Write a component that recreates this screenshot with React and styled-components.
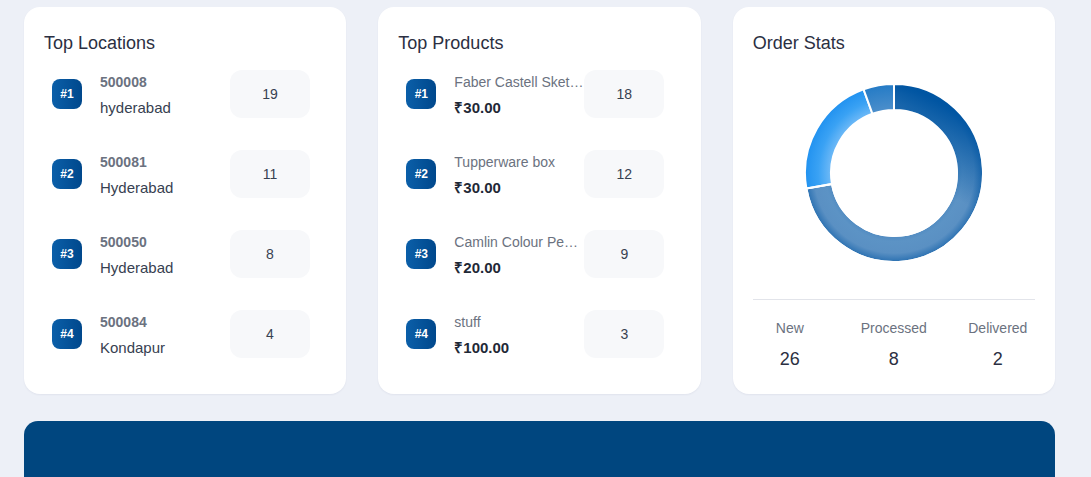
import React from 'react'
import styled, { createGlobalStyle } from 'styled-components'

const locations = [
  { code: '500008', city: 'hyderabad', count: 19 },
  { code: '500081', city: 'Hyderabad', count: 11 },
  { code: '500050', city: 'Hyderabad', count: 8 },
  { code: '500084', city: 'Kondapur', count: 4 },
]

const products = [
  { name: 'Faber Castell Sketch Pens', price: '₹30.00', count: 18 },
  { name: 'Tupperware box', price: '₹30.00', count: 12 },
  { name: 'Camlin Colour Pencils', price: '₹20.00', count: 9 },
  { name: 'stuff', price: '₹100.00', count: 3 },
]

const stats = [
  { label: 'New', value: 26, fill: 'url(#gNew)' },
  { label: 'Processed', value: 8, fill: 'url(#gProc)' },
  { label: 'Delivered', value: 2, fill: 'url(#gDel)' },
]

const C = 90
const R = 89
const r = 63

function point(rad, deg) {
  const a = ((deg - 90) * Math.PI) / 180
  return [C + rad * Math.cos(a), C + rad * Math.sin(a)]
}

function arc(from, to) {
  const large = to - from > 180 ? 1 : 0
  const [x1, y1] = point(R, from)
  const [x2, y2] = point(R, to)
  const [x3, y3] = point(r, to)
  const [x4, y4] = point(r, from)
  return `M${x1} ${y1} A${R} ${R} 0 ${large} 1 ${x2} ${y2} L${x3} ${y3} A${r} ${r} 0 ${large} 0 ${x4} ${y4} Z`
}

function Donut() {
  const total = stats.reduce((s, x) => s + x.value, 0)
  let start = 0
  const slices = stats.map((s) => {
    const end = start + (s.value / total) * 360
    const d = arc(start, end)
    start = end
    return { ...s, d }
  })
  return (
    <svg width="180" height="180" viewBox="0 0 180 180">
      <defs>
        <radialGradient id="gNew" gradientUnits="userSpaceOnUse" cx="90" cy="90" r="89">
          <stop offset="0.7" stop-color="#4f8ac1" />
          <stop offset="0.77" stop-color="#5c93c5" />
          <stop offset="0.9" stop-color="#5a90c3" />
          <stop offset="1" stop-color="#2a70b1" />
        </radialGradient>
        <linearGradient id="gNewTop" x1="0.55" y1="0" x2="0.35" y2="0.4">
          <stop offset="0" stop-color="#0055a2" stop-opacity="1" />
          <stop offset="1" stop-color="#0055a2" stop-opacity="0" />
        </linearGradient>
        <radialGradient id="gProc" gradientUnits="userSpaceOnUse" cx="90" cy="90" r="89">
          <stop offset="0.7" stop-color="#72bbf7" />
          <stop offset="0.85" stop-color="#3aa2f4" />
          <stop offset="1" stop-color="#2192f0" />
        </radialGradient>
        <radialGradient id="gDel" gradientUnits="userSpaceOnUse" cx="90" cy="90" r="89">
          <stop offset="0.7" stop-color="#4d8fcb" />
          <stop offset="1" stop-color="#247bc6" />
        </radialGradient>
      </defs>
      {slices.map((s) => (
        <path key={s.label} d={s.d} fill={s.fill} stroke="#fff" strokeWidth="2" />
      ))}
      <path d={slices[0].d} fill="url(#gNewTop)" stroke="#fff" strokeWidth="2" />
    </svg>
  )
}

export default function App() {
  return (
    <>
      <GlobalStyle />
      <Page>
        <CardGrid>
          <Card>
            <Title>Top Locations</Title>
            <List>
              {locations.map((l, i) => (
                <Row key={l.code}>
                  <Rank>#{i + 1}</Rank>
                  <Info>
                    <Code>{l.code}</Code>
                    <City>{l.city}</City>
                  </Info>
                  <Count>{l.count}</Count>
                </Row>
              ))}
            </List>
          </Card>

          <Card>
            <Title>Top Products</Title>
            <List>
              {products.map((p, i) => (
                <Row key={p.name}>
                  <Rank>#{i + 1}</Rank>
                  <Info>
                    <ProductName>{p.name}</ProductName>
                    <Price>{p.price}</Price>
                  </Info>
                  <Count>{p.count}</Count>
                </Row>
              ))}
            </List>
          </Card>

          <Card>
            <Title>Order Stats</Title>
            <ChartBox>
              <Donut />
            </ChartBox>
            <Divider />
            <StatsRow>
              {stats.map((s) => (
                <Stat key={s.label}>
                  <StatLabel>{s.label}</StatLabel>
                  <StatValue>{s.value}</StatValue>
                </Stat>
              ))}
            </StatsRow>
          </Card>
        </CardGrid>
        <Banner />
      </Page>
    </>
  )
}

const GlobalStyle = createGlobalStyle`
  body {
    margin: 0;
    background: #edf0f7;
    font-family: "Liberation Sans", Arial, sans-serif;
    overflow: hidden;
  }
`

const Page = styled.div`
  width: 1031px;
  padding: 7px 0 0 24px;
`

const CardGrid = styled.div`
  display: grid;
  grid-template-columns: repeat(3, 1fr);
  gap: 32px;
`

const Card = styled.section`
  background: #fff;
  border-radius: 16px;
  padding: 24px 20px;
  height: 387px;
  box-sizing: border-box;
  box-shadow: 0 1px 2px rgba(30, 40, 80, 0.06);
`

const Title = styled.h3`
  margin: 0;
  font-size: 18px;
  line-height: 24px;
  font-weight: 400;
  color: #2b2f42;
`

const List = styled.div`
  display: flex;
  flex-direction: column;
  gap: 32px;
  margin-top: 15px;
`

const Row = styled.div`
  display: flex;
  align-items: center;
  height: 48px;
  padding-left: 8px;
`

const Rank = styled.div`
  width: 30px;
  height: 30px;
  flex: none;
  border-radius: 8px;
  background: linear-gradient(90deg, #0b5fa9, #00488c);
  color: #fff;
  font-size: 12px;
  font-weight: 700;
  display: flex;
  align-items: center;
  justify-content: center;
`

const Info = styled.div`
  width: 130px;
  margin-left: 18px;
  padding-top: 2px;
  display: flex;
  flex-direction: column;
  gap: 6px;
`

const Code = styled.div`
  font-size: 14px;
  line-height: 20px;
  font-weight: 700;
  color: #6b7280;
`

const City = styled.div`
  font-size: 15px;
  line-height: 20px;
  color: #374151;
`

const ProductName = styled.div`
  font-size: 14px;
  line-height: 20px;
  color: #6b7280;
  white-space: nowrap;
  overflow: hidden;
  text-overflow: ellipsis;
`

const Price = styled.div`
  font-size: 15px;
  line-height: 20px;
  font-weight: 700;
  color: #1f2937;
`

const Count = styled.div`
  width: 80px;
  height: 48px;
  flex: none;
  border-radius: 12px;
  background: #f7f8fa;
  color: #374151;
  font-size: 14px;
  display: flex;
  align-items: center;
  justify-content: center;
`

const ChartBox = styled.div`
  display: flex;
  justify-content: center;
  margin-top: 28px;
  height: 180px;
`

const Divider = styled.hr`
  border: 0;
  border-top: 1px solid #e2e4ea;
  margin: 36px 0 0;
`

const StatsRow = styled.div`
  display: grid;
  grid-template-columns: repeat(3, 104px);
  justify-content: center;
  margin: 0 -20px;
  padding-top: 18px;
`

const Stat = styled.div`
  display: flex;
  flex-direction: column;
  align-items: center;
  gap: 9px;
`

const StatLabel = styled.div`
  font-size: 14px;
  line-height: 20px;
  color: #6b7280;
`

const StatValue = styled.div`
  font-size: 18px;
  line-height: 24px;
  color: #2b2f42;
`

const Banner = styled.div`
  margin-top: 27px;
  height: 120px;
  border-radius: 14px;
  background: #00467f;
`
